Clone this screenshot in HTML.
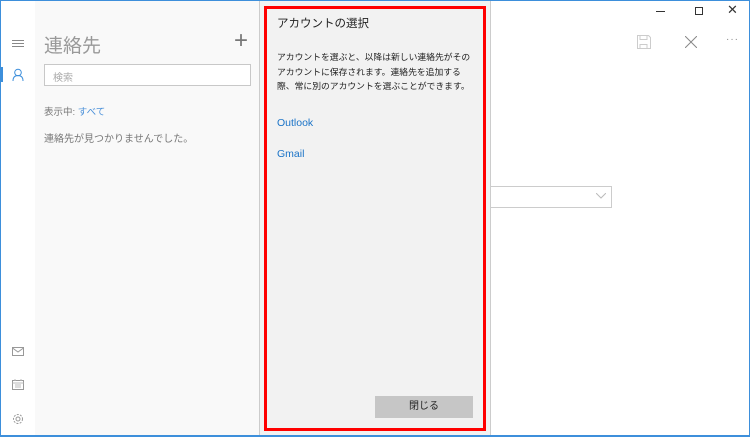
<!DOCTYPE html>
<html><head><meta charset="utf-8"><style>
*{margin:0;padding:0;box-sizing:border-box}
body{width:750px;height:437px;position:relative;overflow:hidden;background:#fff;font-family:"Liberation Sans","Noto Sans CJK JP",sans-serif}
.abs{position:absolute;white-space:nowrap}
</style></head><body>
<div class="abs" style="left:0;top:0;width:750px;height:437px;border:1px solid #3d8fdb;border-bottom:2px solid #3d8fdb"></div>
<div class="abs" style="left:1px;top:1px;width:34px;height:434px;background:#fff"></div>
<div class="abs" style="left:35px;top:1px;width:224px;height:434px;background:#f9f9f9"></div>
<div class="abs" style="left:12px;top:40px;width:12px;height:1px;background:#888;box-shadow:0 3px 0 #888,0 6px 0 #888"></div>
<div class="abs" style="left:1px;top:67px;width:2px;height:15px;background:#3d8fdb"></div>
<svg class="abs" style="left:12px;top:68px" width="12" height="14"><circle cx="6" cy="4.5" r="3.3" fill="none" stroke="#3d8fdb"/><path d="M1 13c0-4 2-5.5 5-5.5s5 1.5 5 5.5" fill="none" stroke="#3d8fdb"/></svg>
<svg class="abs" style="left:12px;top:347px" width="12" height="9"><rect x=".5" y=".5" width="11" height="8" fill="none" stroke="#999"/><path d="M.5 1l5.5 4 5.5-4" fill="none" stroke="#999"/></svg>
<svg class="abs" style="left:12px;top:379px" width="12" height="11"><rect x=".5" y="1.5" width="11" height="9" fill="none" stroke="#999"/><path d="M.5 4h11M3 0v2M9 0v2M3 6h6M3 8h6" stroke="#bbb" fill="none"/></svg>
<svg class="abs" style="left:12px;top:413px" width="12" height="12"><circle cx="6" cy="6" r="4.5" fill="none" stroke="#999" stroke-dasharray="2 1.3"/><circle cx="6" cy="6" r="2" fill="none" stroke="#999"/></svg>
<div class="abs" style="left:44px;top:31px;font-size:19px;color:#999">連絡先</div>
<div class="abs" style="left:234px;top:31px;font-size:24px;line-height:20px;color:#777;font-weight:300">+</div>
<div class="abs" style="left:44px;top:64px;width:207px;height:22px;border:1px solid #c8c8c8;background:#fff;font-size:10px;color:#aaa;padding:4px 8px">検索</div>
<div class="abs" style="left:44px;top:104px;font-size:9.5px;color:#777">表示中: <span style="color:#4a90d9">すべて</span></div>
<div class="abs" style="left:44px;top:130px;font-size:10px;color:#777">連絡先が見つかりませんでした。</div>
<div class="abs" style="left:656px;top:11px;width:9px;height:1px;background:#333"></div>
<div class="abs" style="left:695px;top:7px;width:8px;height:8px;border:1px solid #333"></div>
<div class="abs" style="left:727px;top:2px;font-size:13px;color:#333">✕</div>
<svg class="abs" style="left:637px;top:35px" width="14" height="14"><path d="M.5.5h11l2 2v11H.5z M3 .5v4h7v-4 M3 13.5v-4h7v4" fill="none" stroke="#ccc"/></svg>
<svg class="abs" style="left:685px;top:36px" width="12" height="12"><path d="M0 0l12 12M12 0L0 12" stroke="#888"/></svg>
<div class="abs" style="left:726px;top:34px;font-size:10px;color:#888;letter-spacing:1px">···</div>
<div class="abs" style="left:480px;top:186px;width:132px;height:22px;border:1px solid #ccc;background:#fff"></div>
<svg class="abs" style="left:596px;top:193px" width="10" height="6"><path d="M0 0l5 5 5-5" fill="none" stroke="#bbb"/></svg>
<div class="abs" style="left:259px;top:1px;width:232px;height:434px;background:#f2f2f2;border-left:1px solid #ccc;border-right:1px solid #ccc"></div>
<div class="abs" style="left:264px;top:6px;width:222px;height:425px;border:3px solid #f00"></div>
<div class="abs" style="left:277px;top:15px;font-size:11.5px;color:#222">アカウントの選択</div>
<div class="abs" style="left:277px;top:50px;font-size:8.8px;line-height:14.5px;color:#222">アカウントを選ぶと、以降は新しい連絡先がその<br>アカウントに保存されます。連絡先を追加する<br>際、常に別のアカウントを選ぶことができます。</div>
<div class="abs" style="left:277px;top:117px;font-size:10.5px;color:#1a73c7">Outlook</div>
<div class="abs" style="left:277px;top:148px;font-size:10.5px;color:#1a73c7">Gmail</div>
<div class="abs" style="left:375px;top:396px;width:98px;height:22px;background:#c6c6c6;font-size:10px;color:#222;text-align:center;line-height:22px">閉じる</div>
</body></html>
